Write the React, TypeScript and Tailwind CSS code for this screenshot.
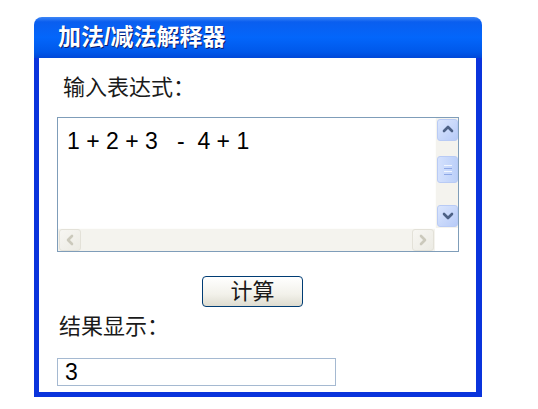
import { ReactNode } from "react";

const cjk = "font-['Liberation_Sans','Noto_Sans_CJK_SC',sans-serif]";

function Chevron({ dir, color }: { dir: "up" | "down" | "left" | "right"; color: string }) {
  const d = {
    up: "M4 9 L8 5 L12 9",
    down: "M4 6 L8 10 L12 6",
    left: "M10 4 L6 8 L10 12",
    right: "M6 4 L10 8 L6 12",
  }[dir];
  return (
    <svg width="16" height="16" viewBox="0 0 16 16">
      <path d={d} fill="none" stroke={color} strokeWidth="2.6" strokeLinecap="round" strokeLinejoin="round" />
    </svg>
  );
}

function ScrollButton({ children, disabled }: { children: ReactNode; disabled?: boolean }) {
  return (
    <div
      className={
        disabled
          ? "flex items-center justify-center w-[22px] h-[22px] rounded-[3px] border border-[#e3e1d8] bg-[linear-gradient(135deg,#f7f6f2,#ecebe4)]"
          : "flex items-center justify-center w-[21px] h-[22px] rounded-[3px] border border-[#b9cbf5] bg-[linear-gradient(135deg,#dbe6fd,#b7cbf8)]"
      }
    >
      {children}
    </div>
  );
}

export default function App() {
  return (
    <div className="w-[538px] h-[409px] bg-white pl-[34px] pt-[17px]">
      <div className="w-[448px]">
        <div className="h-[41px] rounded-t-[8px] bg-[linear-gradient(to_bottom,#3d86f6_0%,#0a5eef_12%,#0366fb_50%,#0058ea_85%,#0048d8_100%)] flex items-center pl-[24px]">
          <span
            className={`${cjk} text-[23px] font-bold text-white leading-none [text-shadow:1px_1px_0_#0b1b6a]`}
          >
            加法/减法解释器
          </span>
        </div>
        <div className="bg-white border-l-[5px] border-r-[6px] border-b-[5px] border-[#0a34dc] pt-[17px] pb-[6px] pl-[18px]">
          <div className={`${cjk} text-[22px] leading-[26px] text-[#1a1a1a] ml-[6px]`}>输入表达式：</div>

          <div className="mt-[16px] w-[402px] h-[135px] border border-[#7f9db9] flex flex-col">
            <div className="flex h-[110px]">
              <div className="flex-1 bg-white pl-[9px] pt-[8px]">
                <span className={`${cjk} text-[23px] leading-[30px] text-black whitespace-pre`}>
                  {"1 + 2 + 3   -  4 + 1"}
                </span>
              </div>
              <div className="w-[23px] bg-[#f4f3ee] border-l border-[#fdfdfb] flex flex-col items-center justify-between pl-[1px] py-[1px]">
                <ScrollButton>
                  <Chevron dir="up" color="#4d6185" />
                </ScrollButton>
                <div className="flex-1 flex items-start pt-[15px]">
                  <div className="w-[21px] h-[27px] rounded-[3px] border border-[#b9cbf5] bg-[linear-gradient(90deg,#d4e1fd,#bcd0f9)] flex flex-col items-center justify-center gap-[2px]">
                    <div className="w-[8px] h-[1px] bg-[#f2f6fe]" />
                    <div className="w-[8px] h-[1px] bg-[#8ea8e6]" />
                    <div className="w-[8px] h-[1px] bg-[#f2f6fe]" />
                    <div className="w-[8px] h-[1px] bg-[#8ea8e6]" />
                  </div>
                </div>
                <ScrollButton>
                  <Chevron dir="down" color="#4d6185" />
                </ScrollButton>
              </div>
            </div>
            <div className="flex h-[23px]">
              <div className="flex-1 bg-[#f4f3ee] flex items-center justify-between border-t border-[#fdfdfb] px-[1px]">
                <ScrollButton disabled>
                  <Chevron dir="left" color="#cbc9bc" />
                </ScrollButton>
                <ScrollButton disabled>
                  <Chevron dir="right" color="#cbc9bc" />
                </ScrollButton>
              </div>
              <div className="w-[23px] bg-white" />
            </div>
          </div>

          <button
            className={`${cjk} mt-[24px] ml-[145px] w-[101px] h-[31px] rounded-[4px] border border-[#003c74] bg-[linear-gradient(to_bottom,#ffffff,#f2f1ea_60%,#dedcd0)] text-[22px] leading-none text-[#1a1a1a] flex items-center justify-center`}
          >
            计算
          </button>

          <div className={`${cjk} mt-[7px] text-[22px] leading-[26px] text-[#1a1a1a] ml-[2px]`}>结果显示：</div>

          <div className="mt-[18px] w-[279px] h-[28px] border border-[#a5b9d1] flex items-center pl-[7px]">
            <span className={`${cjk} text-[23px] leading-none text-black`}>3</span>
          </div>
        </div>
      </div>
    </div>
  );
}
